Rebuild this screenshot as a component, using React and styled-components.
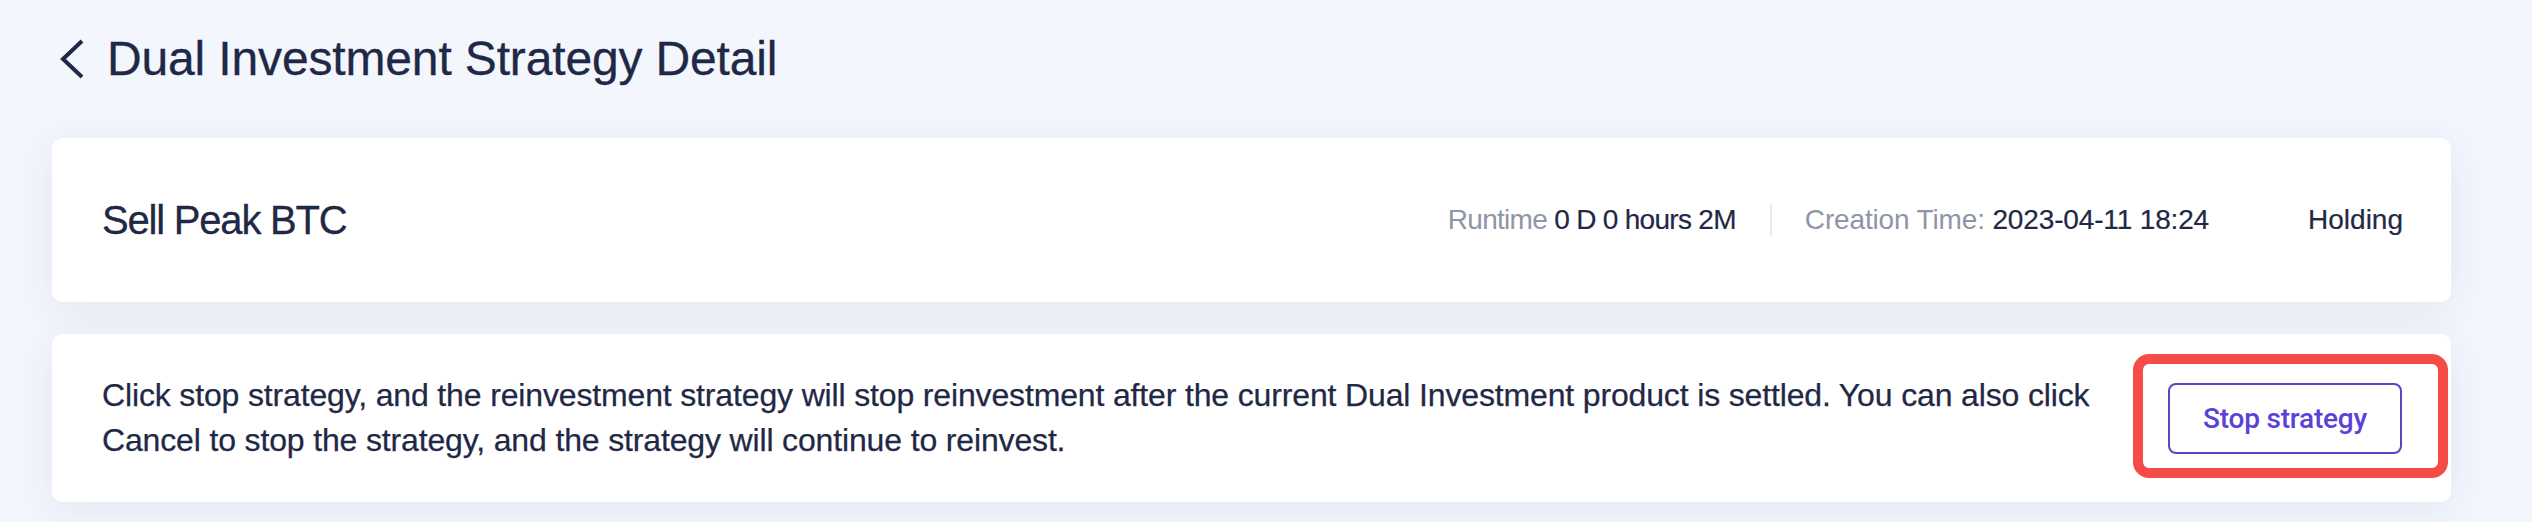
import React from 'react';
import styled, { createGlobalStyle } from 'styled-components';

const GlobalStyle = createGlobalStyle`
  html, body {
    margin: 0;
    padding: 0;
    background: #f3f6fd;
  }
  body {
    font-family: "Liberation Sans", Arial, sans-serif;
    color: #1f2945;
  }
`;

const Page = styled.div`
  width: 2532px;
  min-height: 522px;
  box-sizing: border-box;
  padding: 0 81px 20px 52px;
  background: #f3f6fd;
`;

const Header = styled.header`
  height: 117px;
  display: flex;
  align-items: center;
  gap: 23px;
  padding-left: 8px;
  margin-bottom: 21px;
`;

const BackIcon = styled.svg`
  display: block;
  flex: none;
  width: 24px;
  height: 40px;
  color: #1f2945;
`;

const Title = styled.h1`
  margin: 0;
  font-size: 48px;
  line-height: 48px;
  font-weight: 400;
  letter-spacing: -0.15px;
  color: #1f2945;
  -webkit-text-stroke: 0.3px currentColor;
`;

const Card = styled.section`
  background: #ffffff;
  border-radius: 10px;
  box-shadow: 0 8px 40px rgba(40, 52, 96, 0.08);
  display: flex;
  align-items: center;
  box-sizing: border-box;
`;

const SummaryCard = styled(Card)`
  height: 164px;
  padding: 0 48px 0 50px;
  justify-content: space-between;
`;

const StrategyName = styled.h2`
  margin: 0;
  font-size: 40px;
  line-height: 48px;
  font-weight: 400;
  letter-spacing: -1.2px;
  color: #1f2945;
  -webkit-text-stroke: 0.3px currentColor;
`;

const Meta = styled.div`
  display: flex;
  align-items: center;
  font-size: 28px;
  line-height: 34px;
`;

const MetaItem = styled.span`
  color: #8e95a6;
  white-space: nowrap;
  letter-spacing: ${(p) => p.$tracking || '-0.3px'};
`;

const MetaValue = styled.span`
  color: #1f2945;
  -webkit-text-stroke: 0.2px currentColor;
`;

const Divider = styled.span`
  width: 2px;
  height: 32px;
  background: #e8eaef;
  margin: 0 33px 0 34px;
`;

const Status = styled.span`
  color: #1f2945;
  margin-left: 99px;
  white-space: nowrap;
  -webkit-text-stroke: 0.2px currentColor;
`;

const NoticeCard = styled(Card)`
  margin-top: 32px;
  padding: 39px 49px 39px 50px;
  gap: 40px;
`;

const Notice = styled.p`
  flex: 1;
  margin: 0;
  font-size: 32px;
  line-height: 45px;
  letter-spacing: -0.15px;
  color: #1f2945;
  -webkit-text-stroke: 0.25px currentColor;
`;

const ButtonWrap = styled.div`
  position: relative;
  flex: none;
`;

const Highlight = styled.span`
  position: absolute;
  top: -29px;
  left: -35px;
  right: -46px;
  bottom: -24px;
  border: 10px solid #f54c48;
  border-radius: 16px;
  pointer-events: none;
`;

const StopButton = styled.button`
  display: flex;
  align-items: center;
  justify-content: center;
  width: 234px;
  height: 71px;
  box-sizing: border-box;
  border: 2px solid #5747c2;
  border-radius: 8px;
  background: #ffffff;
  color: #5a42d8;
  font-family: Roboto, "Liberation Sans", Arial, sans-serif;
  font-weight: 500;
  font-size: 28px;
  letter-spacing: -0.2px;
  cursor: pointer;
  padding: 0;
`;

export default function App() {
  return (
    <>
      <GlobalStyle />
      <Page>
        <Header>
          <BackIcon viewBox="0 0 24 40" fill="none" aria-hidden="true">
            <polyline
              points="22,2 3,20 22,38"
              stroke="currentColor"
              strokeWidth="4"
              strokeLinejoin="miter"
            />
          </BackIcon>
          <Title>Dual Investment Strategy Detail</Title>
        </Header>

        <SummaryCard>
          <StrategyName>Sell Peak BTC</StrategyName>
          <Meta>
            <MetaItem $tracking="-0.7px">
              Runtime <MetaValue>0 D 0 hours 2M</MetaValue>
            </MetaItem>
            <Divider />
            <MetaItem $tracking="-0.15px">
              Creation Time: <MetaValue>2023-04-11 18:24</MetaValue>
            </MetaItem>
            <Status>Holding</Status>
          </Meta>
        </SummaryCard>

        <NoticeCard>
          <Notice>
            Click stop strategy, and the reinvestment strategy will stop reinvestment after the
            current Dual Investment product is settled. You can also click Cancel to stop the
            strategy, and the strategy will continue to reinvest.
          </Notice>
          <ButtonWrap>
            <Highlight />
            <StopButton type="button">Stop strategy</StopButton>
          </ButtonWrap>
        </NoticeCard>
      </Page>
    </>
  );
}
